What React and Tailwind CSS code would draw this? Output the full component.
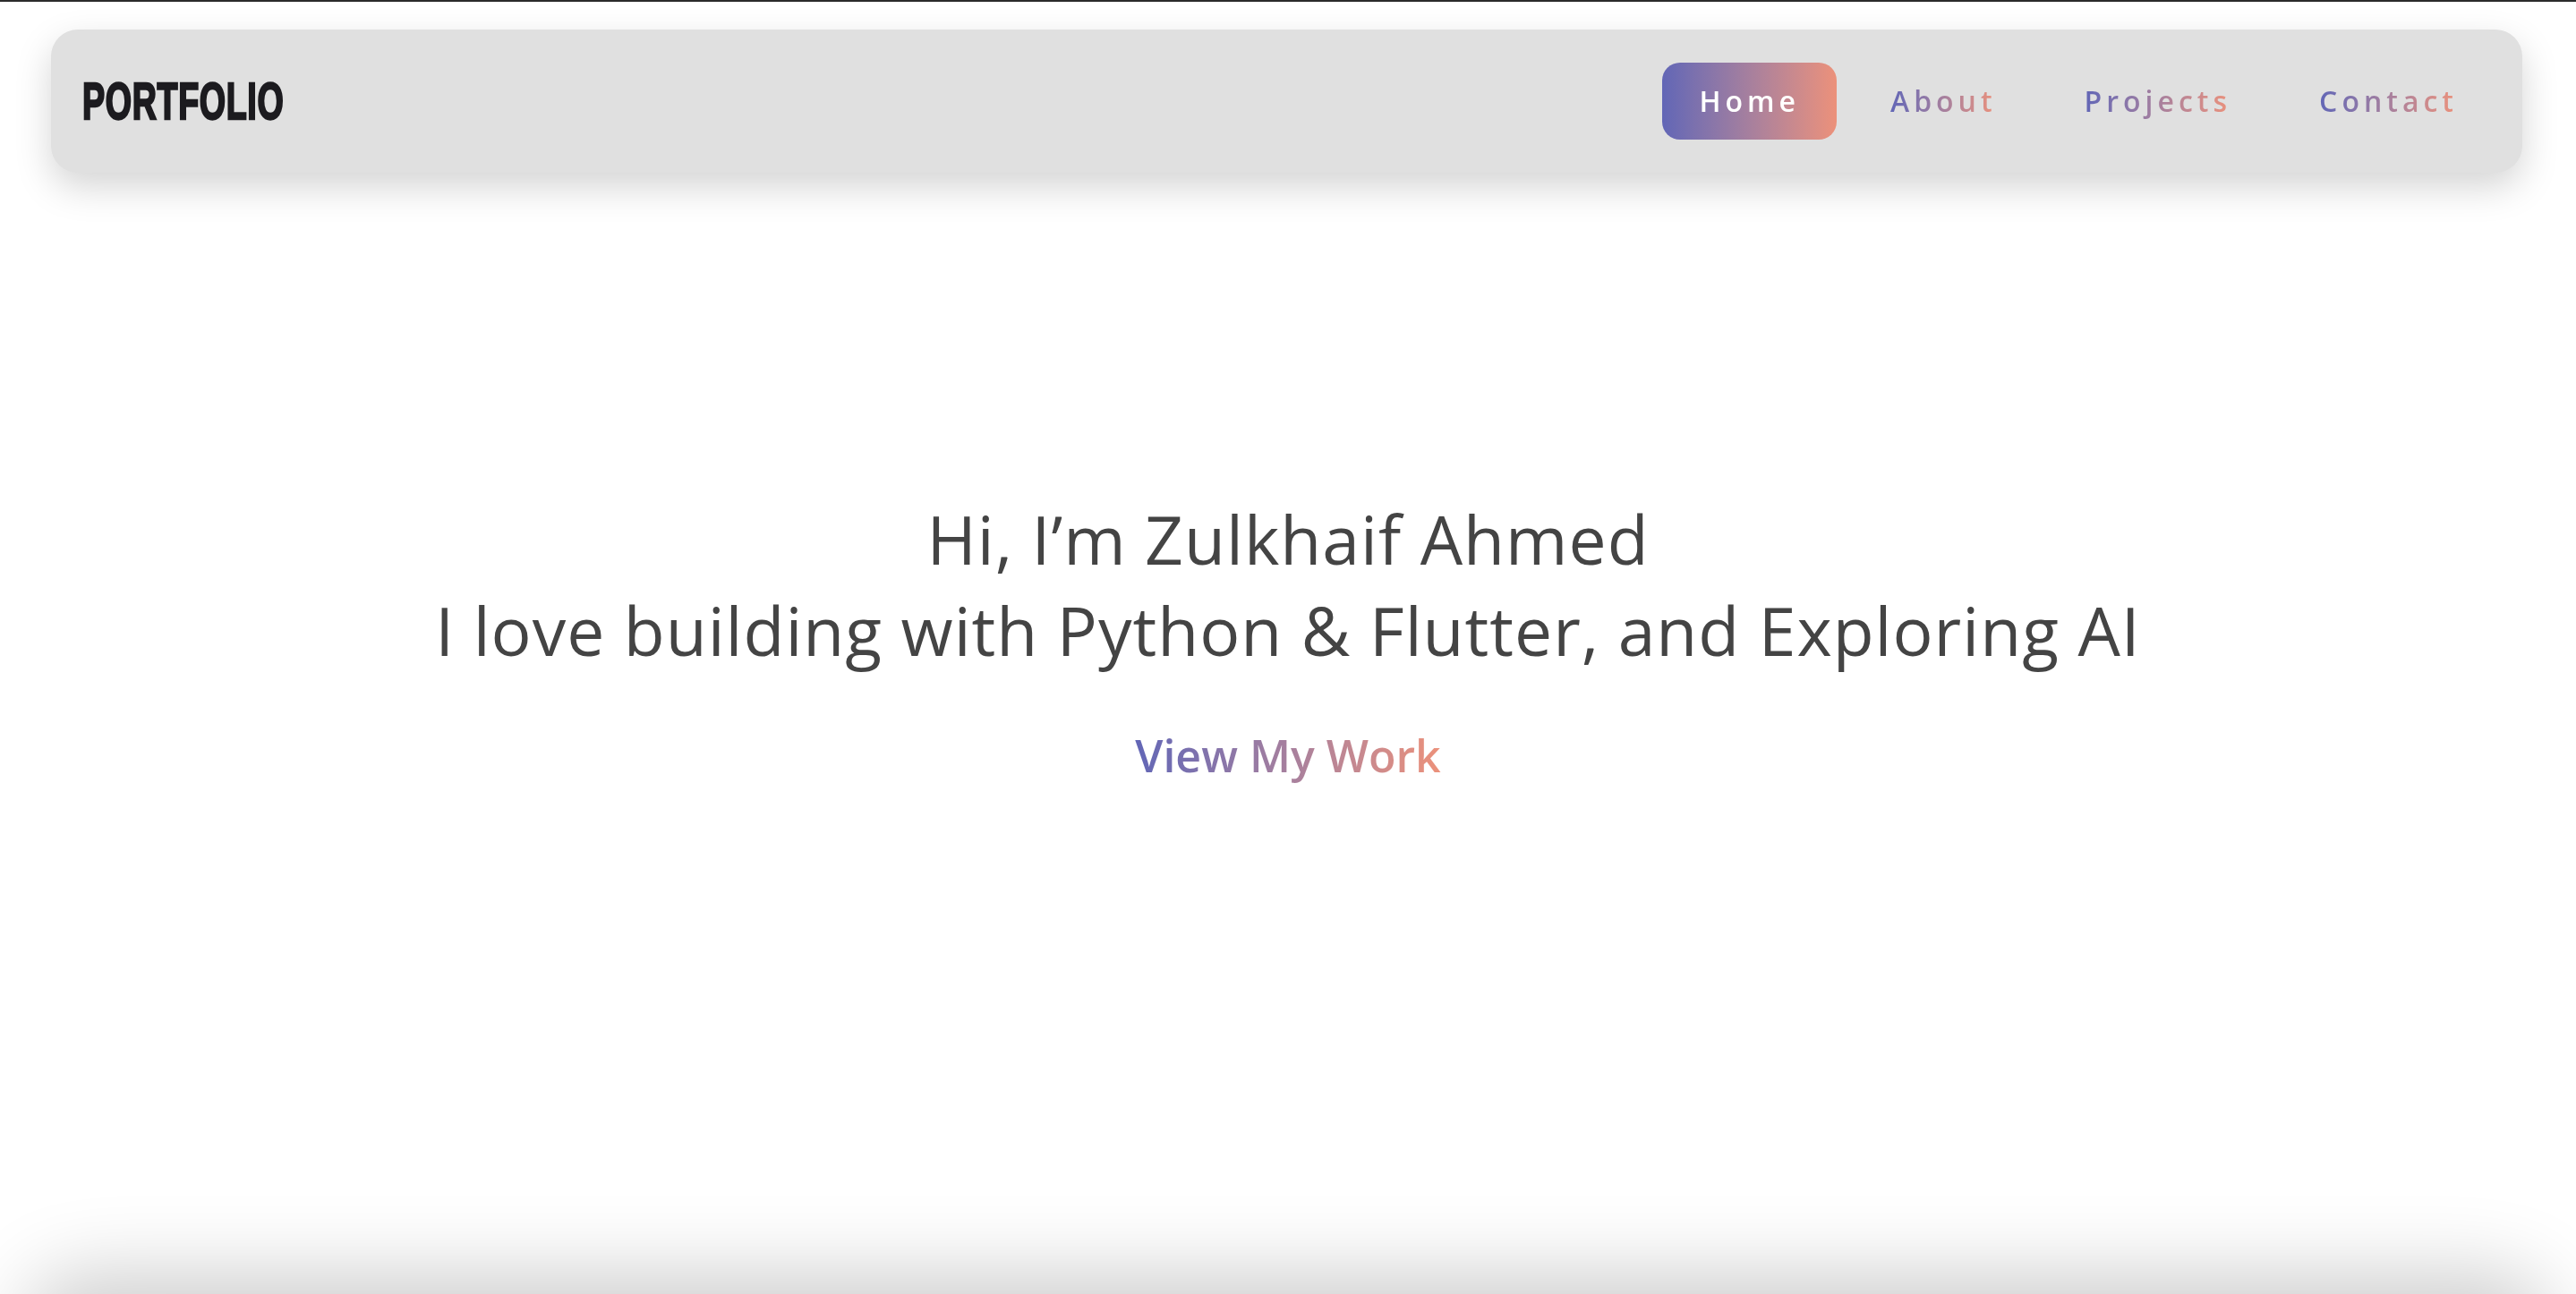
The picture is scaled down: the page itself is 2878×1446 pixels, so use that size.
import React, { useState } from 'react'

const navLinks = ['Home', 'About', 'Projects', 'Contact']

const gradText =
  'bg-gradient-to-r from-[#6266b6] to-[#ec917a] bg-clip-text text-transparent'

function Navbar() {
  const [active, setActive] = useState('Home')

  return (
    <header className="fixed top-[33px] left-[57px] right-[60px] z-10">
      <nav className="h-[160px] flex items-center justify-between pl-[35px] pr-[34px] rounded-[30px] bg-[#e0e0e0] shadow-[0_16px_40px_rgba(0,0,0,0.17)]">
        <div className="font-['Liberation_Sans',sans-serif] text-[#1c1b1f] text-[57px] font-bold leading-none">
          <span className="inline-block origin-left scale-x-[0.66] tracking-[1px] [-webkit-text-stroke:2.5px_#1c1b1f]">
            PORTFOLIO
          </span>
        </div>

        <ul className="flex items-center gap-[22px] font-['Open_Sans',sans-serif]">
          {navLinks.map((link) => (
            <li key={link}>
              <button
                onClick={() => setActive(link)}
                className={
                  active === link
                    ? 'h-[86px] px-[41px] rounded-[20px] bg-gradient-to-r from-[#6266b6] to-[#ec917a] text-white text-[32px] font-semibold tracking-[5px]'
                    : 'h-[86px] px-[38px] rounded-[20px] text-[32px] font-semibold tracking-[5px]'
                }
              >
                <span className={active === link ? '' : gradText}>{link}</span>
              </button>
            </li>
          ))}
        </ul>
      </nav>
    </header>
  )
}

function Hero() {
  return (
    <section className="h-screen pb-[12px] flex flex-col items-center justify-center bg-white font-['Open_Sans',sans-serif]">
      <h1 className="text-center text-[#444444] text-[75px] font-normal leading-[102px] tracking-[1px]">
        Hi, I’m Zulkhaif Ahmed
        <br />
        I love building with Python &amp; Flutter, and Exploring AI
      </h1>
      <a href="#projects" className="mt-[46px] px-[24px] py-[10px] text-[50px] font-semibold leading-[66px]">
        <span className={gradText}>View My Work</span>
      </a>
    </section>
  )
}

export default function App() {
  return (
    <div className="relative h-screen overflow-hidden bg-white border-t-[2px] border-[#2b2b2b]">
      <Navbar />
      <Hero />
      <section
        id="projects"
        className="mx-[30px] h-[600px] bg-white shadow-[0_-24px_90px_rgba(0,0,0,0.2)] rounded-t-[60px]"
      />
    </div>
  )
}
